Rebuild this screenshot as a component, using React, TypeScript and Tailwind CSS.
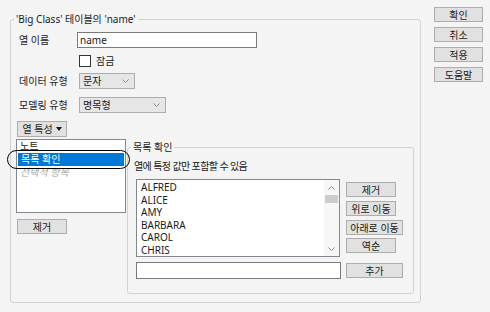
import React from "react";

const Btn = ({ children, w, h = 15, className = "" }: { children: React.ReactNode; w: number; h?: number; className?: string }) => (
  <div
    className={`flex items-center justify-center border border-[#adadad] bg-[#e1e1e1] text-[10px] leading-none text-[#1a1a1a] ${className}`}
    style={{ width: w, height: h }}
  >
    {children}
  </div>
);

const Chevron = ({ up = false }: { up?: boolean }) => (
  <svg width="7" height="4" viewBox="0 0 7 4" className="block">
    <path d={up ? "M0.5 3.5 L3.5 0.5 L6.5 3.5" : "M0.5 0.5 L3.5 3.5 L6.5 0.5"} fill="none" stroke="#8a8a8a" strokeWidth="1" />
  </svg>
);

const names = ["ALFRED", "ALICE", "AMY", "BARBARA", "CAROL", "CHRIS"];

export default function App() {
  return (
    <div className="w-[490px] h-[312px] bg-[#f4f4f4] flex items-start font-['Noto_Sans','Noto_Sans_CJK_KR',sans-serif] text-[10px] text-[#1a1a1a] overflow-hidden">
      <fieldset className="ml-[10px] mt-[12px] w-[411px] h-[291px] border border-[#d3d3d3] rounded-[3px] pl-[3px] flex flex-col">
        <legend className="px-[2px] h-[14px] leading-[14px]">'Big Class' 테이블의 'name'</legend>

        <div className="mt-[6px] flex items-center">
          <div className="ml-[5px] w-[58px] leading-[16px]">열 이름</div>
          <div className="w-[180px] h-[16px] border border-[#7a7a7a] bg-white pl-[2px] leading-[14px]">name</div>
        </div>

        <div className="mt-[7px] ml-[65px] flex items-center">
          <div className="w-[12px] h-[12px] border border-[#333] bg-white" />
          <div className="ml-[5px] leading-[12px]">잠금</div>
        </div>

        <div className="mt-[6px] flex items-center">
          <div className="ml-[5px] w-[60px] leading-[16px]">데이터 유형</div>
          <div className="w-[56px] h-[16px] border border-[#acacac] bg-[#e6e6e6] flex items-center justify-between pl-[3px] pr-[5px]">
            <span className="leading-[14px]">문자</span>
            <Chevron />
          </div>
        </div>

        <div className="mt-[8px] flex items-center">
          <div className="ml-[5px] w-[60px] leading-[16px]">모델링 유형</div>
          <div className="w-[87px] h-[16px] border border-[#acacac] bg-[#e6e6e6] flex items-center justify-between pl-[3px] pr-[5px]">
            <span className="leading-[14px]">명목형</span>
            <Chevron />
          </div>
        </div>

        <div className="mt-[8px] ml-[3px] w-[50px] h-[16px] border border-[#adadad] bg-[#e1e1e1] flex items-center justify-center gap-[3px]">
          <span className="leading-none">열 특성</span>
          <svg width="6" height="4" viewBox="0 0 6 4" className="block">
            <path d="M0 0 L6 0 L3 4 Z" fill="#1a1a1a" />
          </svg>
        </div>

        <div className="mt-[2px] flex items-start">
          <div className="relative ml-[2px] w-[110px] flex flex-col">
            <div className="h-[74px] border border-[#828790] bg-white flex flex-col">
              <div className="h-[13px] leading-[13px] pl-[3px]">노트</div>
              <div className="h-[13px] leading-[13px] pl-[3px] mx-[1px] bg-[#0078d7] text-white">목록 확인</div>
              <div className="h-[13px] leading-[13px] pl-[3px] italic text-[#a8a8a8]">선택적 항목</div>
            </div>
            <div className="absolute left-[-9px] top-[11px] w-[123px] h-[19px] border-[1.5px] border-black rounded-full" />
            <Btn w={50} className="mt-[6px] ml-[1px]">제거</Btn>
          </div>

          <fieldset className="ml-[1px] mt-[1px] w-[287px] h-[154px] border border-[#d3d3d3] rounded-[3px] pl-[3px] flex flex-col">
            <legend className="px-[2px] h-[14px] leading-[14px]">목록 확인</legend>
            <div className="mt-[5px] ml-[3px] leading-[14px] tracking-[-0.6px]">열에 특정 값만 포함할 수 있음</div>

            <div className="mt-[6px] ml-[5px] flex items-start">
              <div className="w-[204px] h-[78px] border border-[#828790] bg-white flex">
                <div className="flex-1 pl-[4px] pt-[1px] flex flex-col">
                  {names.map((n) => (
                    <div key={n} className="h-[12.6px] leading-[12.6px]">{n}</div>
                  ))}
                </div>
                <div className="w-[15px] bg-[#f7f7f7] flex flex-col">
                  <div className="h-[15px] flex items-center justify-center"><Chevron up /></div>
                  <div className="flex-1 flex flex-col">
                    <div className="h-[8px] mx-[1px] bg-[#cdcdcd]" />
                  </div>
                  <div className="h-[15px] flex items-center justify-center"><Chevron /></div>
                </div>
              </div>
              <div className="ml-[6px] flex flex-col">
                <Btn w={50} className="mt-[3px]">제거</Btn>
                <Btn w={50} className="mt-[4px]">위로 이동</Btn>
                <Btn w={57} className="mt-[4px]">아래로 이동</Btn>
                <Btn w={50} className="mt-[3px]">역순</Btn>
              </div>
            </div>

            <div className="mt-[5px] ml-[5px] flex items-center">
              <div className="w-[205px] h-[17px] border border-[#7a7a7a] bg-white" />
              <Btn w={57} className="ml-[5px]">추가</Btn>
            </div>
          </fieldset>
        </div>
      </fieldset>

      <div className="ml-[13px] mt-[7px] flex flex-col gap-[5px]">
        <Btn w={49}>확인</Btn>
        <Btn w={49}>취소</Btn>
        <Btn w={49}>적용</Btn>
        <Btn w={49}>도움말</Btn>
      </div>
    </div>
  );
}
